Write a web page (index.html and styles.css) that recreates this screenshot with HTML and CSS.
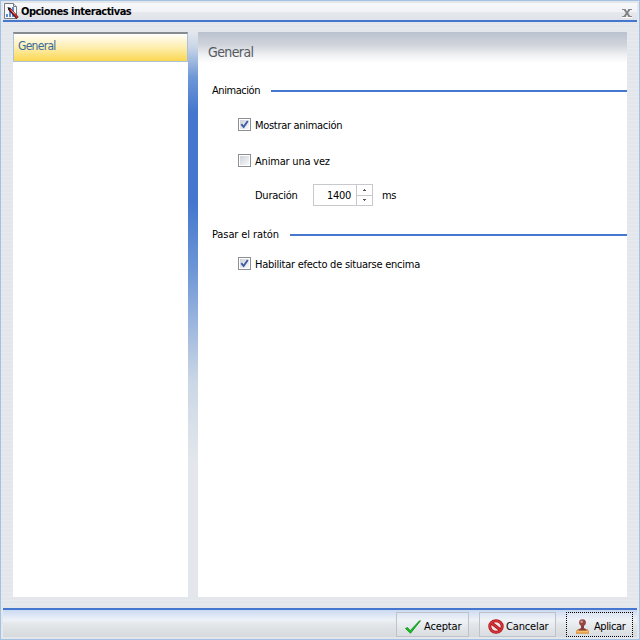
FILE: index.html
```
<!DOCTYPE html>
<html lang="es">
<head>
<meta charset="utf-8">
<title>Opciones interactivas</title>
<link rel="stylesheet" href="styles.css">
</head>
<body>
<div class="window">
  <header class="titlebar">
    <svg class="app-icon" width="16" height="17" viewBox="0 0 16 17">
      <path d="M1.500 .5h9l3 3v12h-12z" fill="#f8fafd" stroke="#777b82"/>
      <path d="M10.500 .5v3h3" fill="#d8dce2" stroke="#777b82"/>
      <path d="M3 11h2v3H3zM6 8h2v6H6zM9 4h2v10H9z" fill="#5d8bd6"/>
      <path d="M6 5.500l8.500 9.500" stroke="#3a1010" stroke-width="3"/>
      <path d="M7 6l7.500 8.500" stroke="#e02a2a" stroke-width="1.600"/>
      <path d="M4.500 4l3 1-2 2z" fill="#111"/>
      <path d="M8.500 7.300l3 3.400" stroke="#ffd0c8" stroke-width=".7"/>
    </svg>
    <h1 class="title">Opciones interactivas</h1>
    <svg class="close" width="10" height="9" viewBox="0 0 10 9">
      <path d="M0 8.500h10" stroke="#fff"/>
      <path d="M2.500 .5l5 7M7.500 .5l-5 7" stroke="#808080" stroke-width="1.900"/>
      <path d="M0 .5h4M6 .5h4M0 7.500h4M6 7.500h4" stroke="#888"/>
    </svg>
  </header>
  <main class="body">
    <nav class="sidebar"><div class="nav-item"><span class="t-nav">General</span></div></nav>
    <div class="divider"></div>
    <section class="content">
      <h2 class="heading">General</h2>
      <div class="group group-anim"><span class="t-anim">Animación</span><i class="rule"></i></div>
      <label class="option show"><span class="check"><svg width="9" height="9" viewBox="0 0 9 9"><path d="M1.300 4.200L3.600 7 7.800 1" fill="none" stroke="#3d5aa5" stroke-width="1.900"/></svg></span><span class="t-show">Mostrar animación</span></label>
      <label class="option once"><span class="check"></span><span class="t-once">Animar una vez</span></label>
      <div class="duration">
        <span class="t-dur">Duración</span>
        <div class="spinner">
          <span class="value">1400</span>
          <div class="arrows">
            <span class="arrow"><svg width="3" height="2" viewBox="0 0 3 2"><path d="M0 2h3V1H2V0H1v1H0z" fill="#555"/></svg></span>
            <span class="arrow"><svg width="3" height="2" viewBox="0 0 3 2"><path d="M0 0h3v1H2v1H1V1H0z" fill="#555"/></svg></span>
          </div>
        </div>
        <span class="t-ms">ms</span>
      </div>
      <div class="group group-hover"><span class="t-hover">Pasar el ratón</span><i class="rule"></i></div>
      <label class="option hover"><span class="check"><svg width="9" height="9" viewBox="0 0 9 9"><path d="M1.300 4.200L3.600 7 7.800 1" fill="none" stroke="#3d5aa5" stroke-width="1.900"/></svg></span><span class="t-enable">Habilitar efecto de situarse encima</span></label>
    </section>
  </main>
  <footer class="footer">
    <div class="button accept">
      <svg width="16" height="14" viewBox="0 0 16 14"><path d="M.5 8.500l2-1 2.700 3.200L14.500.800h1L5.500 13.200z" fill="#12c51b" stroke="#0a8a16" stroke-width=".8"/></svg>
      <span class="t-accept">Aceptar</span>
    </div>
    <div class="button cancel">
      <svg width="16" height="15" viewBox="0 0 16 15"><ellipse cx="8" cy="7.500" rx="6.200" ry="5.700" fill="#efe7e7" stroke="#a91218" stroke-width="3"/><path d="M3.500 4l9 7" stroke="#a91218" stroke-width="3"/><ellipse cx="8" cy="7.500" rx="6.300" ry="5.800" fill="none" stroke="#d9363a" stroke-width="1.500"/><path d="M3.500 4l9 7" stroke="#d9363a" stroke-width="1.400"/></svg>
      <span class="t-cancel">Cancelar</span>
    </div>
    <div class="button apply">
      <svg width="13" height="15" viewBox="0 0 13 15"><path d="M1.500 10.500h10l1.500 2v2H0v-2z" fill="#e9a548" stroke="#b8762c" stroke-width=".4"/><path d="M5 6h3v3l2.500 1.500v1h-8v-1L5 9z" fill="#87403d"/><circle cx="6.500" cy="3.600" r="3.400" fill="#934643"/><circle cx="5.700" cy="2.700" r="1.300" fill="#d69a91"/><path d="M1 12.500h11" stroke="#f4bd68"/></svg>
      <span class="t-apply">Aplicar</span>
    </div>
  </footer>
</div>
</body>
</html>
```
FILE: styles.css
```
* { box-sizing: border-box; }
body { margin: 0; font: 11px/14px "DejaVu Sans Condensed", "DejaVu Sans", sans-serif; font-stretch: condensed; color: #000; }
h1, h2 { margin: 0; font-weight: normal; }
svg { display: block; flex: none; }
span { white-space: nowrap; }
.window { width: 640px; height: 640px; padding: 2px; border: 1px solid #a3c1e3; display: flex; flex-direction: column; background: repeating-linear-gradient(#e3e7eb 0 3px, #e7eaee 3px 4px); overflow: hidden; }
.titlebar { height: 19px; flex: none; display: flex; align-items: flex-start; border-bottom: 2px solid #4577ce; background: linear-gradient(#f7f8fa, #f1f3f7 50%, #e5e8ec 56%, #e0e4ea); }
.app-icon { margin-right: 2px; }
.title { font-weight: bold; font-size: 11px; line-height: 18px; letter-spacing: -.52px; white-space: nowrap; }
.close { margin: 6px 5px 0 auto; }
.body { height: 586px; flex: none; display: flex; padding: 10px 10px 11px; }
.sidebar { width: 175px; background: #fff; }
.nav-item { height: 30px; padding: 5px 4px; border: 1px solid #a8c2dc; border-top: 2px solid #858a91; background: linear-gradient(#fffefa, #fdeeae 50%, #fbd750); color: #39699f; font-size: 12px; }
.divider { width: 10px; background: linear-gradient(#e3e7ec, #c9d5e7 15px, #6f97d7 45px, #4577ce 80px, #4577ce 170px, #6f97d7 240px, #a3bbdf 300px, #cbd7e6 350px, #e3e7eb 430px); }
.content { width: 429px; display: flex; flex-direction: column; background: linear-gradient(#bac2cf, #d0d4db 13px, #eceef0 22px, #fff 31px); }
.heading { height: 51px; padding: 12px 0 0 10px; font-size: 14px; line-height: 17px; letter-spacing: -.6px; color: #55595f; }
.group { height: 14px; display: flex; align-items: center; padding-left: 14px; }
.group-hover { margin-top: 21px; }
.rule { height: 2px; flex: 1; margin-top: 2px; background: #4577ce; }
.t-anim, .t-hover { flex: none; }
.t-anim { width: 59px; letter-spacing: -.45px; margin-top: 2px; }
.t-hover { width: 78px; letter-spacing: -.1px; margin-top: 1px; }
.t-nav { letter-spacing: -.7px; }
.t-show { letter-spacing: -.3px; }
.t-once { letter-spacing: -.2px; }
.t-enable { letter-spacing: -.25px; }
.t-dur { width: 58px; letter-spacing: -.25px; margin-top: 2px; }
.t-ms { margin: 2px 0 0 9px; letter-spacing: -.3px; }
.t-accept, .t-cancel { letter-spacing: -.15px; }
.t-apply { letter-spacing: -.4px; }
.option { height: 15px; display: flex; align-items: center; padding-left: 40px; gap: 4px; }
.show { margin-top: 21px; }
.once { margin-top: 21px; }
.hover { margin-top: 16px; }
.check { width: 13px; height: 13px; margin-bottom: 2px; border: 1px solid #8b8e92; padding: 1px; background: linear-gradient(135deg, #cfd3da, #f7f8f9) content-box #fff; }
.duration { height: 22px; margin-top: 15px; padding-left: 57px; display: flex; align-items: center; }
.spinner { width: 60px; height: 22px; border: 1px solid #c7c9cc; display: flex; background: #fff; }
.value { flex: 1; text-align: right; line-height: 22px; padding-right: 5px; letter-spacing: -.3px; }
.arrows { width: 16px; display: flex; flex-direction: column; border-left: 1px solid #c7c9cc; }
.arrow { flex: 1; display: flex; align-items: center; justify-content: center; }
.arrow + .arrow { border-top: 1px solid #c7c9cc; }
.footer { height: 29px; flex: none; border-top: 2px solid #4577ce; background: linear-gradient(#cbd9f1, #eef2f8 10px, #e4e7e9 14px, #d7dadd); display: flex; justify-content: flex-end; gap: 10px; padding: 2px 4px 0 0; }
.button { height: 25px; border: 1px solid #bfc3c9; display: flex; align-items: center; background: linear-gradient(#dce5f4, #eff2f6 7px, #e4e7ea 15px, #d9dce0); }
.button svg { margin-top: 4px; }
.button span { margin-top: 4px; }
.accept { width: 73px; padding-left: 8px; gap: 3px; }
.cancel { width: 77px; padding-left: 8px; gap: 2px; }
.apply { width: 67px; padding-left: 9px; gap: 5px; border: 1px dotted #000; }
```
